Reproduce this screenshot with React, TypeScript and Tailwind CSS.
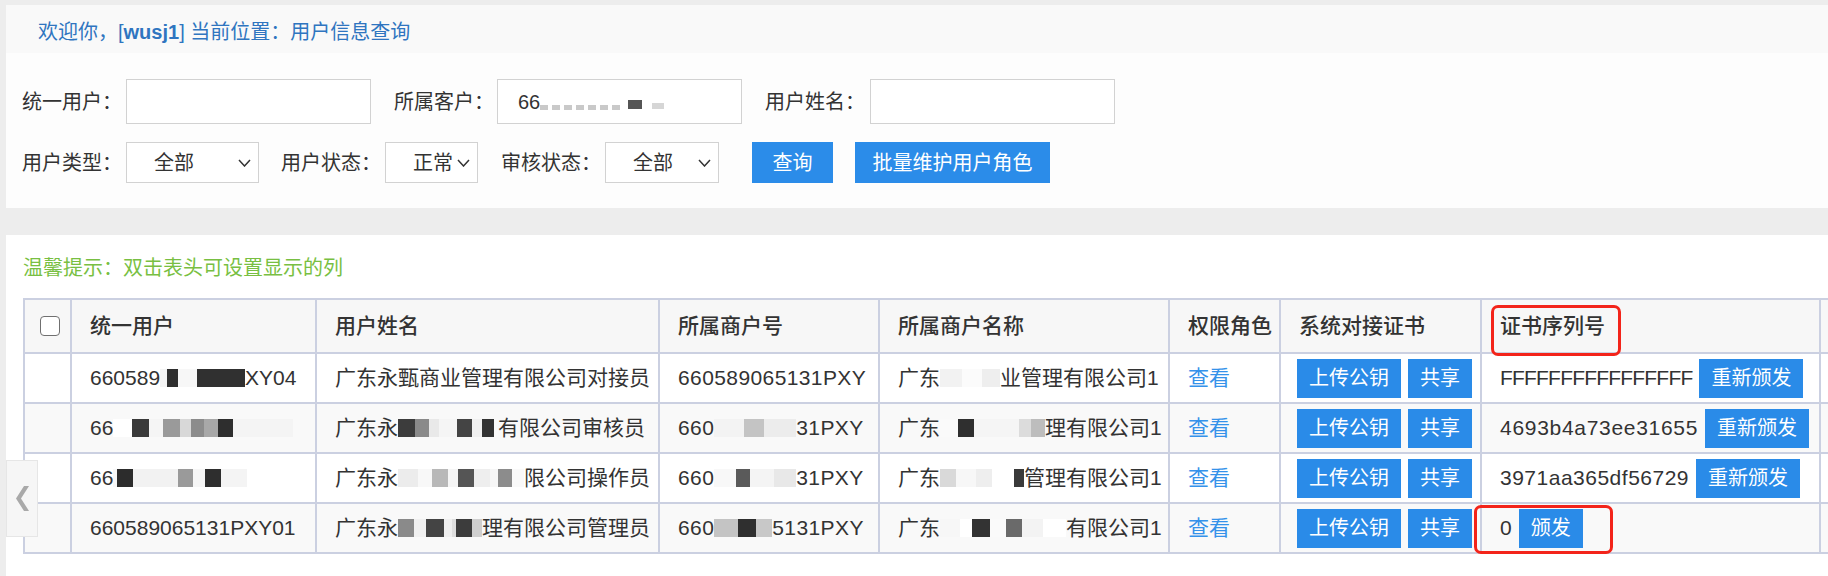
import React from 'react';

type Seg = string | [string, number];

const FONT = "font-['Liberation_Sans','Noto_Sans_CJK_SC',sans-serif]";

const ROWS: { uid: Seg[]; name: Seg[]; mid: Seg[]; mname: Seg[]; serial: string; track: string; action: string }[] = [
    {
        uid: ['660589', ['#f3f3f3', 7], ['#2e2e2e', 11], ['#f7f7f7', 19], ['#303030', 48], 'XY04'],
        name: ['广东永甄商业管理有限公司对接员'],
        mid: ['660589065131PXY'],
        mname: ['广东', ['#f2f2f2', 22], ['#fbfbfb', 20], ['#eeeeee', 18], '业管理有限公司1'],
        serial: 'FFFFFFFFFFFFFFFF',
        track: 'tracking-[-0.8px]',
        action: '重新颁发',
    },
    {
        uid: ['66', ['#ffffff', 19], ['#3a3a3a', 17], ['#f5f5f5', 14], ['#9a9a9a', 17], ['#d8d8d8', 11], ['#8c8c8c', 13], ['#a8a8a8', 14], ['#2e2e2e', 15], ['#f4f4f4', 60]],
        name: ['广东永', ['#3c3c3c', 17], ['#8a8a8a', 14], ['#e9e9e9', 10], ['#f5f5f5', 18], ['#444444', 15], ['#f0f0f0', 10], ['#333333', 12], ['#fafafa', 4], '有限公司审核员'],
        mid: ['660', ['#f3f3f3', 30], ['#c4c4c4', 20], ['#ececec', 32], '31PXY'],
        mname: ['广东', ['#fafafa', 18], ['#2f2f2f', 16], ['#f5f5f5', 45], ['#dcdcdc', 12], ['#bdbdbd', 14], '理有限公司1'],
        serial: '4693b4a73ee31655',
        track: 'tracking-[0.7px]',
        action: '重新颁发',
    },
    {
        uid: ['66', ['#f7f7f7', 4], ['#2c2c2c', 16], ['#f2f2f2', 45], ['#9a9a9a', 15], ['#f6f6f6', 12], ['#2e2e2e', 16], ['#f4f4f4', 26], ['#ffffff', 40]],
        name: ['广东永', ['#ececec', 20], ['#f8f8f8', 14], ['#b8b8b8', 16], ['#f5f5f5', 10], ['#555555', 16], ['#eeeeee', 16], ['#f6f6f6', 8], ['#8c8c8c', 14], ['#f9f9f9', 12], '限公司操作员'],
        mid: ['660', ['#f8f8f8', 22], ['#5a5a5a', 14], ['#f4f4f4', 24], ['#e8e8e8', 22], '31PXY'],
        mname: ['广东', ['#d9d9d9', 16], ['#f7f7f7', 20], ['#eeeeee', 16], ['#ffffff', 22], ['#3a3a3a', 10], '管理有限公司1'],
        serial: '3971aa365df56729',
        track: 'tracking-[0.5px]',
        action: '重新颁发',
    },
    {
        uid: ['660589065131PXY01'],
        name: ['广东永', ['#8a8a8a', 16], ['#f0f0f0', 12], ['#444444', 18], ['#efefef', 8], ['#dedede', 4], ['#3c3c3c', 16], ['#cfcfcf', 10], '理有限公司管理员'],
        mid: ['660', ['#c4c4c4', 24], ['#2f2f2f', 18], ['#c8c8c8', 16], '5131PXY'],
        mname: ['广东', ['#f7f7f7', 20], ['#ffffff', 12], ['#333333', 18], ['#fafafa', 16], ['#6a6a6a', 16], ['#f3f3f3', 21], ['#ffffff', 23], '有限公司1'],
        serial: '0',
        track: '',
        action: '颁发',
    },
];

const HEADERS = ['统一用户', '用户姓名', '所属商户号', '所属商户名称', '权限角色', '系统对接证书'];

// mosaic-masked text: strings render as text, tuples as grey blocks
const Masked: React.FC<{ segs: Seg[] }> = ({ segs }) => (
    <span className="inline-flex items-center whitespace-nowrap">
        {segs.map((s, i) =>
            typeof s === 'string' ? (
                <span key={i}>{s}</span>
            ) : (
                <span key={i} className="inline-block h-[18px]" style={{ width: s[1], background: s[0] }} />
            ),
        )}
    </span>
);

const Chevron = () => (
    <svg width="13" height="8" viewBox="0 0 13 8" className="ml-auto mr-[7px]">
        <path d="M1 1 L6.5 7 L12 1" fill="none" stroke="#333" strokeWidth="1.5" />
    </svg>
);

const Select: React.FC<{ value: string; w: string }> = ({ value, w }) => (
    <div className={`flex h-[41px] items-center border border-[#d2d2d2] bg-white pl-[27px] ${w}`}>
        <span>{value}</span>
        <Chevron />
    </div>
);

const TBtn: React.FC<{ children: React.ReactNode; className?: string }> = ({ children, className = '' }) => (
    <span className={`inline-flex h-[39px] items-center bg-[#2a8be8] px-[12px] text-[20px] tracking-normal text-white ${className}`}>
        {children}
    </span>
);

const App: React.FC = () => {
    return (
        <div className={`relative h-[576px] overflow-hidden bg-[#ededed] pt-[5px] text-[#333] ${FONT}`}>
            {/* query panel */}
            <div className="ml-[6px] bg-[#fdfdfd] text-[20px]">
                <div className="flex h-[48px] items-center bg-[#f9f9f9] pl-[32px] pt-[6px] leading-[28px] text-[#2f75c0]">
                    欢迎你，[<b>wusj1</b>] 当前位置：用户信息查询
                </div>
                <div className="pb-[25px] pl-[16px] pt-[26px] leading-[28px]">
                    <div className="flex h-[45px] items-center">
                        <span className="w-[104px] shrink-0">统一用户：</span>
                        <div className="h-[45px] w-[245px] border border-[#d2d2d2] bg-white" />
                        <span className="ml-[23px] w-[103px] shrink-0">所属客户：</span>
                        <div className="flex h-[45px] w-[245px] items-center border border-[#d2d2d2] bg-white pl-[20px]">
                            <span>66</span>
                            <span className="mt-[12px] inline-block h-[5px] w-[82px] bg-[repeating-linear-gradient(90deg,#c9c9c9_0_8px,transparent_8px_12px)]" />
                            <span className="ml-[6px] mt-[6px] inline-block h-[9px] w-[14px] bg-[#555]" />
                            <span className="ml-[10px] mt-[8px] inline-block h-[6px] w-[12px] bg-[#d6d6d6]" />
                        </div>
                        <span className="ml-[23px] w-[105px] shrink-0">用户姓名：</span>
                        <div className="h-[45px] w-[245px] border border-[#d2d2d2] bg-white" />
                    </div>
                    <div className="mt-[18px] flex h-[41px] items-center">
                        <span className="w-[104px] shrink-0">用户类型：</span>
                        <Select value="全部" w="w-[133px]" />
                        <span className="ml-[22px] w-[104px] shrink-0">用户状态：</span>
                        <Select value="正常" w="w-[93px]" />
                        <span className="ml-[23px] w-[104px] shrink-0">审核状态：</span>
                        <Select value="全部" w="w-[114px]" />
                        <button className="ml-[33px] h-[41px] w-[81px] bg-[#2b8ce9] text-white">查询</button>
                        <button className="ml-[22px] h-[41px] w-[195px] bg-[#2b8ce9] text-white">批量维护用户角色</button>
                    </div>
                </div>
            </div>

            {/* list panel */}
            <div className="ml-[6px] mt-[27px] h-[341px] overflow-hidden bg-white pl-[17px] pt-[19px]">
                <div className="text-[20px] leading-[28px] text-[#78bf42]">温馨提示：双击表头可设置显示的列</div>
                <table className="mt-[16px] w-[1916px] table-fixed border-collapse border-2 border-[#cbd0e1] text-left text-[21px] leading-[28px]">
                    <colgroup>
                        <col className="w-[47px]" />
                        <col className="w-[245px]" />
                        <col className="w-[343px]" />
                        <col className="w-[220px]" />
                        <col className="w-[290px]" />
                        <col className="w-[111px]" />
                        <col className="w-[201px]" />
                        <col className="w-[339px]" />
                        <col className="w-[120px]" />
                    </colgroup>
                    <thead>
                        <tr className="h-[54px] bg-[#f7f7f7]">
                            <th className="border-2 border-[#cbd0e1] p-0">
                                <div className="flex justify-center pl-[4px]">
                                    <span className="h-[20px] w-[20px] rounded-[4px] border-[1.5px] border-[#707070] bg-white" />
                                </div>
                            </th>
                            {HEADERS.map((h) => (
                                <th key={h} className="whitespace-nowrap border-2 border-[#cbd0e1] py-0 pl-[18px] font-medium">
                                    {h}
                                </th>
                            ))}
                            <th className="relative whitespace-nowrap border-2 border-[#cbd0e1] py-0 pl-[18px] font-medium">
                                证书序列号
                                <span className="absolute left-[9px] top-[5px] z-10 h-[51px] w-[130px] rounded-[7px] border-[3px] border-[#f3241a]" />
                            </th>
                            <th className="border-2 border-[#cbd0e1]" />
                        </tr>
                    </thead>
                    <tbody>
                        {ROWS.map((r, i) => (
                            <tr key={i} className={`h-[50px] ${i % 2 === 1 ? 'bg-[#f9f9f9]' : 'bg-white'}`}>
                                <td className="border-2 border-[#cbd0e1]" />
                                <td className="whitespace-nowrap border-2 border-[#cbd0e1] py-0 pl-[18px]">
                                    <Masked segs={r.uid} />
                                </td>
                                <td className="whitespace-nowrap border-2 border-[#cbd0e1] py-0 pl-[18px]">
                                    <Masked segs={r.name} />
                                </td>
                                <td className="whitespace-nowrap border-2 border-[#cbd0e1] py-0 pl-[18px] tracking-[0.4px]">
                                    <Masked segs={r.mid} />
                                </td>
                                <td className="whitespace-nowrap border-2 border-[#cbd0e1] py-0 pl-[18px]">
                                    <Masked segs={r.mname} />
                                </td>
                                <td className="whitespace-nowrap border-2 border-[#cbd0e1] py-0 pl-[18px] text-[#3592ea]">查看</td>
                                <td className="whitespace-nowrap border-2 border-[#cbd0e1] py-0 pl-[16px]">
                                    <div className="flex items-center">
                                        <TBtn>上传公钥</TBtn>
                                        <TBtn className="ml-[7px]">共享</TBtn>
                                    </div>
                                </td>
                                <td className="relative whitespace-nowrap border-2 border-[#cbd0e1] py-0 pl-[18px]">
                                    <div className="flex items-center">
                                        <span className={r.track}>{r.serial}</span>
                                        <TBtn className="ml-[7px]">{r.action}</TBtn>
                                    </div>
                                    {i === 3 && (
                                        <span className="absolute -left-[8px] top-[1px] z-10 h-[49px] w-[139px] rounded-[7px] border-[3px] border-[#f3241a]" />
                                    )}
                                </td>
                                <td className="border-2 border-[#cbd0e1]" />
                            </tr>
                        ))}
                    </tbody>
                </table>
            </div>

            {/* page-turn handle over the left edge */}
            <div className="absolute left-[6px] top-[460px] flex h-[77px] w-[32px] items-center justify-center border border-[#e6e6e6] bg-[#f6f6f6]">
                <svg width="14" height="25" viewBox="0 0 14 25">
                    <polygon points="14,0 6,12.5 14,25 9,25 1,12.5 9,0" fill="#a9a9a9" />
                </svg>
            </div>
        </div>
    );
};

export default App;
